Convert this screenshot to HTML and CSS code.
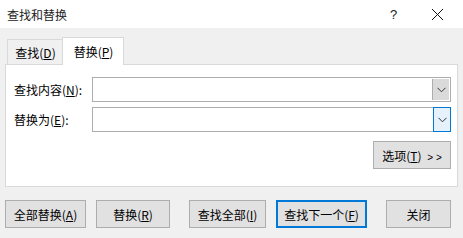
FILE: index.html
```html
<!DOCTYPE html>
<html lang="zh-CN">
<head>
    <meta charset="UTF-8">
    <title>查找和替换</title>
    <link rel="stylesheet" href="styles.css">
</head>
<body>
    <div class="dialog">
        <div class="title-bar">
            <span class="title">查找和替换</span>
            <span class="help">?</span>
            <span class="close">
                <svg width="13" height="13" viewBox="0 0 13 13"><path d="M1 1 L12 12 M12 1 L1 12" stroke="#111" stroke-width="1" fill="none"/></svg>
            </span>
        </div>

        <div class="tabs">
            <div class="tab">查找(<u>D</u>)</div>
            <div class="tab active">替换(<u>P</u>)</div>
        </div>

        <div class="panel">
            <div class="field-row">
                <label class="field-label">查找内容(<u>N</u>):</label>
                <div class="combo">
                    <div class="combo-text"></div>
                    <div class="combo-btn">
                        <svg width="9" height="6" viewBox="0 0 9 6"><path d="M0.5 0.8 L4.5 4.8 L8.5 0.8" stroke="#333" stroke-width="1" fill="none"/></svg>
                    </div>
                </div>
            </div>
            <div class="field-row">
                <label class="field-label">替换为(<u>E</u>):</label>
                <div class="combo">
                    <div class="combo-text"></div>
                    <div class="combo-btn hot">
                        <svg width="9" height="6" viewBox="0 0 9 6"><path d="M0.5 0.8 L4.5 4.8 L8.5 0.8" stroke="#333" stroke-width="1" fill="none"/></svg>
                    </div>
                </div>
            </div>
            <div class="options-row">
                <button class="btn options">选项(<u>T</u>) <span class="more">&gt; &gt;</span></button>
            </div>
        </div>

        <div class="buttons">
            <button class="btn b-all">全部替换(<u>A</u>)</button>
            <button class="btn b-one">替换(<u>R</u>)</button>
            <button class="btn b-findall">查找全部(<u>I</u>)</button>
            <button class="btn b-next focus">查找下一个(<u>F</u>)</button>
            <button class="btn b-close">关闭</button>
        </div>
    </div>
</body>
</html>
```

FILE: styles.css
```css
body {
    margin: 0;
    padding: 0;
    font-family: "Noto Sans CJK SC", "Noto Sans", sans-serif;
    font-size: 12px;
    color: #000;
    background: #f0f0f0;
}
.dialog {
    width: 463px;
    height: 238px;
    background: #f0f0f0;
    overflow: hidden;
}
.title-bar {
    height: 28px;
    background: white;
    display: flex;
    align-items: center;
    padding-left: 7px;
}
.title {
    flex: 1;
    font-size: 12px;
    color: #222;
}
.help {
    width: 10px;
    margin-right: 31px;
    font-family: "Liberation Sans", sans-serif;
    font-size: 13px;
    color: #222;
}
.close {
    display: flex;
    margin-right: 19px;
}
.tabs {
    display: flex;
    align-items: flex-end;
    padding-left: 7px;
    margin-top: 9px;
    height: 27px;
}
.tab {
    height: 24px;
    width: 53px;
    border: 1px solid #d9d9d9;
    border-bottom: none;
    background: #f0f0f0;
    display: flex;
    align-items: center;
    justify-content: center;
    padding-left: 1px;
}
.tab.active {
    height: 27px;
    width: 59px;
    margin-bottom: -1px;
    background: white;
    position: relative;
    z-index: 1;
    margin-left: -1px;
}
.panel {
    margin: 0 5px;
    background: white;
    border: 1px solid #d9d9d9;
    padding: 12px 6px 0 8px;
    box-sizing: border-box;
    height: 123px;
}
.field-row {
    display: flex;
    align-items: center;
    height: 25px;
    margin-bottom: 5px;
}
.field-label {
    width: 78px;
}
.combo {
    flex: 1;
    height: 25px;
    box-sizing: border-box;
    border: 1px solid #adadad;
    display: flex;
    background: white;
}
.combo-text {
    flex: 1;
}
.combo-btn {
    width: 17px;
    box-sizing: border-box;
    background: #dadada;
    border-left: 1px solid #adadad;
    display: flex;
    align-items: center;
    justify-content: center;
    margin: 1px;
    margin-left: 0;
}
.combo-btn.hot {
    background: #e5f1fb;
    border: 1px solid #0078d7;
    margin: -1px;
    width: 18px;
}
.options-row {
    display: flex;
    justify-content: flex-end;
    margin-top: 9px;
}
.btn {
    font-family: "Noto Sans CJK SC", "Noto Sans", sans-serif;
    font-size: 12px;
    color: #000;
    height: 28px;
    background: #e1e1e1;
    border: 1px solid #adadad;
    padding: 0;
    margin: 0;
}
.options {
    width: 78px;
}
.more {
    font-family: "Liberation Sans", sans-serif;
    font-size: 10px;
    margin-left: 3px;
}
.buttons {
    display: flex;
    padding-left: 5px;
    margin-top: 13px;
}
.b-all { width: 81px; }
.b-one { width: 74px; margin-left: 10px; }
.b-findall { width: 77px; margin-left: 19px; }
.b-next { width: 91px; margin-left: 10px; }
.b-close { width: 65px; margin-left: 19px; }
.btn.focus {
    border: 2px solid #0078d7;
}
u {
    text-decoration-thickness: 1px;
    text-underline-offset: 1px;
}
```
